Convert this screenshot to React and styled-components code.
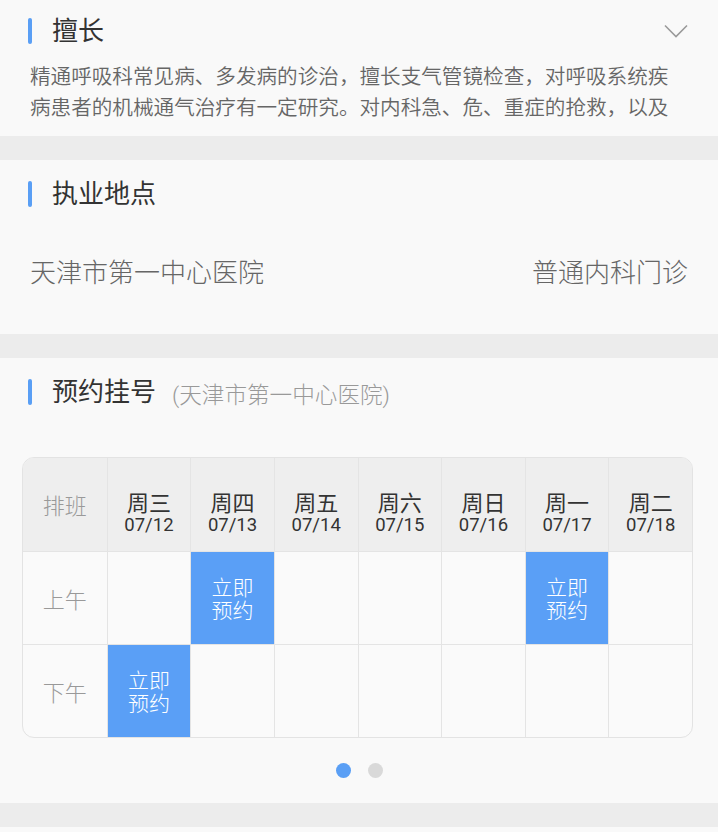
import React from "react";
import styled, { createGlobalStyle } from "styled-components";

const GlobalStyle = createGlobalStyle`
  html, body { margin: 0; padding: 0; background: #f9f9f9; }
  body { font-family: Roboto, "Noto Sans CJK SC", sans-serif; }
  * { box-sizing: border-box; }
`;

const Page = styled.div`
  width: 718px;
  height: 832px;
  overflow: hidden;
  background: #ececec;
  display: flex;
  flex-direction: column;
  gap: 24px;
`;

const Section = styled.section`
  background: #f9f9f9;
  padding: 0 30px ${(p) => p.$pb || 0}px;
  flex-shrink: 0;
  ${(p) => p.$grow && "flex: 1;"}
`;

const Header = styled.div`
  height: ${(p) => p.$h || 68}px;
  display: flex;
  align-items: center;
`;

const Bar = styled.span`
  width: 4px;
  height: 26px;
  border-radius: 2px;
  background: #5a9ff5;
  margin-left: -2px;
  margin-right: 20px;
`;

const Title = styled.h2`
  margin: 0;
  font-size: 26px;
  font-weight: 400;
  color: #333;
  line-height: 30px;
`;

const Sub = styled.span`
  font-size: 22.6px;
  font-weight: 300;
  color: #999;
  margin-left: 16px;
  margin-top: 2px;
`;

const Chevron = styled.svg`
  margin-left: auto;
  width: 24px;
  height: 14px;
`;

const Desc = styled.p`
  margin: 0;
  font-size: 20.6px;
  font-weight: 350;
  line-height: 31px;
  color: #666;
  max-height: 62px;
  overflow: hidden;
`;

const LocRow = styled.div`
  height: 84px;
  display: flex;
  align-items: center;
  justify-content: space-between;
  font-size: 26px;
  font-weight: 300;
  color: #666;
`;

const Table = styled.div`
  margin: 31px -5px 0 -8px;
  border: 1px solid #e3e3e3;
  border-radius: 12px;
  overflow: hidden;
  display: grid;
  grid-template-columns: repeat(8, 1fr);
  grid-template-rows: 93px 93px 93px;
  background: #fafafa;
`;

const HeadCell = styled.div`
  background: #eeeeee;
  border-left: ${(p) => (p.$first ? "none" : "1px solid #e4e4e4")};
  display: flex;
  flex-direction: column;
  align-items: center;
  justify-content: center;
  padding-top: ${(p) => (p.$label ? 4 : 19)}px;
  color: ${(p) => (p.$label ? "#999" : "#333")};
  font-weight: ${(p) => (p.$label ? 300 : 400)};
`;

const Day = styled.span`
  font-size: 22px;
  line-height: 22px;
`;

const DateText = styled.span`
  font-size: 18.5px;
  line-height: 20px;
`;

const Cell = styled.div`
  border-top: 1px solid #e4e4e4;
  border-left: ${(p) => (p.$first ? "none" : "1px solid #e4e4e4")};
  display: flex;
  flex-direction: column;
  align-items: center;
  justify-content: center;
  padding-top: 4px;
  background: ${(p) => (p.$on ? "#5a9ff6" : "transparent")};
  color: ${(p) => (p.$on ? "#fff" : "#999")};
  font-size: 22px;
  font-weight: 300;
  line-height: 23px;
`;

const BookText = styled.span`
  font-size: 21px;
  line-height: 23px;
  text-align: center;
  width: 44px;
`;

const Dots = styled.div`
  margin-top: 25px;
  display: flex;
  justify-content: center;
  gap: 17px;
`;

const Dot = styled.span`
  width: 15px;
  height: 15px;
  border-radius: 50%;
  background: ${(p) => (p.$active ? "#5a9ff5" : "#d9d9d9")};
`;

const days = [
  ["周三", "07/12"],
  ["周四", "07/13"],
  ["周五", "07/14"],
  ["周六", "07/15"],
  ["周日", "07/16"],
  ["周一", "07/17"],
  ["周二", "07/18"],
];

const rows = [
  { label: "上午", on: [1, 5] },
  { label: "下午", on: [0] },
];

export default function App() {
  return (
    <>
      <GlobalStyle />
      <Page>
        <Section $pb={12}>
          <Header $h={62}>
            <Bar />
            <Title>擅长</Title>
            <Chevron viewBox="0 0 24 14">
              <polyline points="1,1.5 12,12.5 23,1.5" fill="none" stroke="#9a9a9a" strokeWidth="1.6" />
            </Chevron>
          </Header>
          <Desc>
            精通呼吸科常见病、多发病的诊治，擅长支气管镜检查，对呼吸系统疾病患者的机械通气治疗有一定研究。对内科急、危、重症的抢救，以及
          </Desc>
        </Section>
        <Section $pb={22}>
          <Header>
            <Bar />
            <Title>执业地点</Title>
          </Header>
          <LocRow>
            <span>天津市第一中心医院</span>
            <span>普通内科门诊</span>
          </LocRow>
        </Section>
        <Section $pb={25}>
          <Header>
            <Bar />
            <Title>预约挂号</Title>
            <Sub>(天津市第一中心医院)</Sub>
          </Header>
          <Table>
            <HeadCell $first $label>
              <Day>排班</Day>
            </HeadCell>
            {days.map(([d, dt]) => (
              <HeadCell key={dt}>
                <Day>{d}</Day>
                <DateText>{dt}</DateText>
              </HeadCell>
            ))}
            {rows.map((r) => (
              <React.Fragment key={r.label}>
                <Cell $first>{r.label}</Cell>
                {days.map((d, i) =>
                  r.on.includes(i) ? (
                    <Cell key={i} $on>
                      <BookText>立即预约</BookText>
                    </Cell>
                  ) : (
                    <Cell key={i} />
                  )
                )}
              </React.Fragment>
            ))}
          </Table>
          <Dots>
            <Dot $active />
            <Dot />
          </Dots>
        </Section>
        <Section $grow />
      </Page>
    </>
  );
}
